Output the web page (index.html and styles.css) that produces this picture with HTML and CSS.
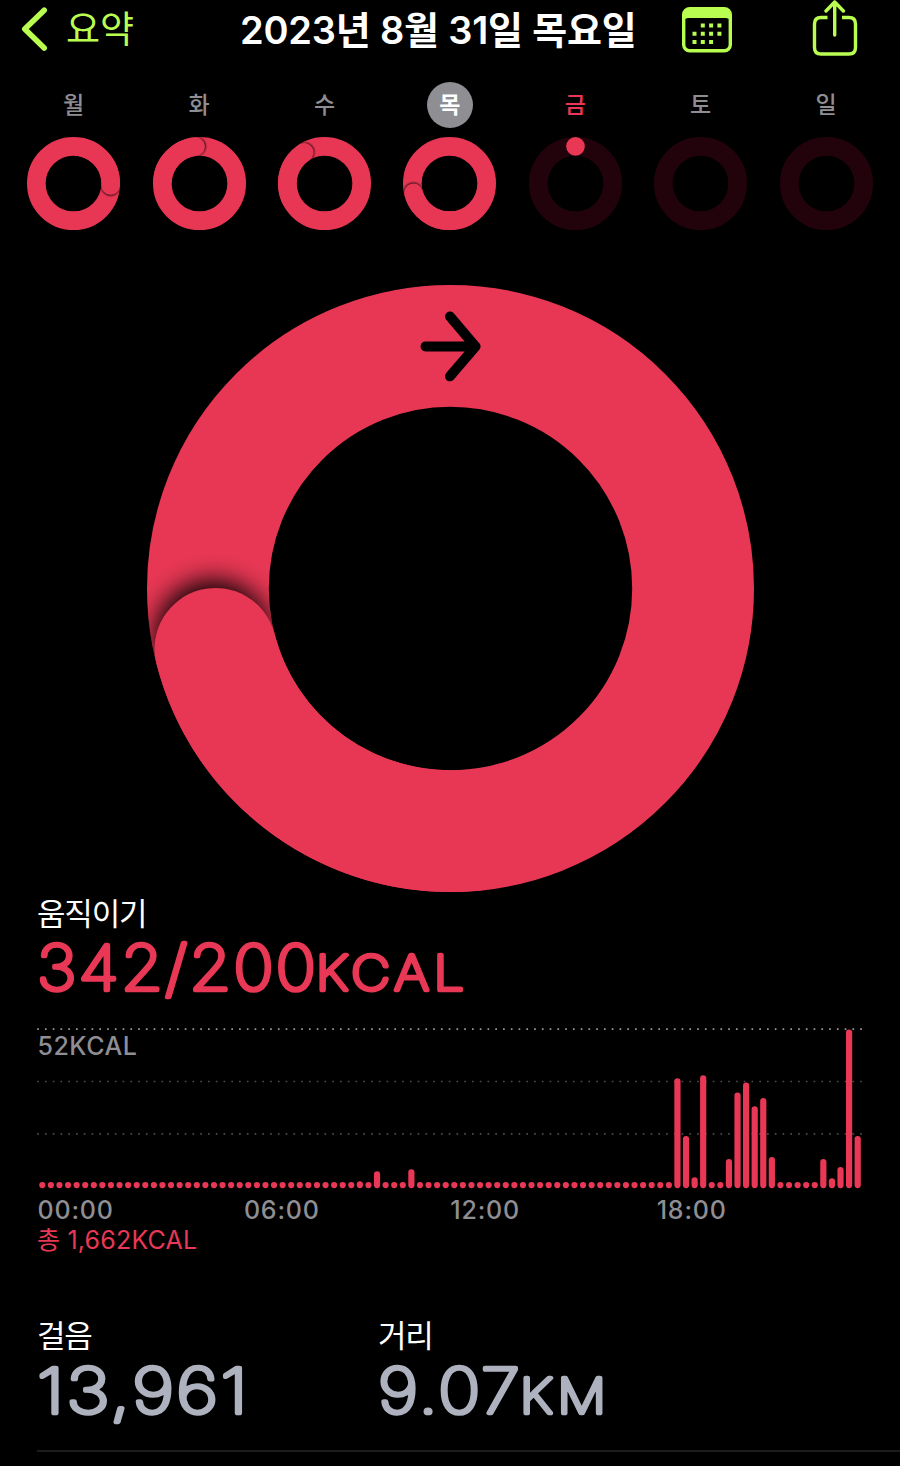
FILE: index.html
```
<!DOCTYPE html>
<html lang="ko">
<head>
  <meta charset="UTF-8">
  <meta name="viewport" content="width=device-width, initial-scale=1.0">
  <title>활동</title>
  <link rel="stylesheet" href="styles.css">
</head>
<body>
<div class="screen">
  <header class="header">
    <a class="back">
      <svg width="28" height="46" viewBox="0 0 28 46"><path d="M24.2 4.2 L4.8 23 L24.2 42"/></svg>
      <span>요약</span>
    </a>
    <h1 class="title">2023년 8월 31일 목요일</h1>
    <svg class="calendar" width="50" height="46" viewBox="0 0 50 46">
      <rect class="frame" x="1.7" y="1.7" width="46.6" height="42" rx="6"/>
      <path d="M1 12 V7 Q1 1 7 1 H43 Q49 1 49 7 V14 Q47 11 44 11 H6 Q3 11 1 14 Z"/>
      <g class="dots">
        <path d="M18.8 18.5h4M27.1 18.5h4M35.4 18.5h4"/>
        <path d="M10.5 26.8h4M18.8 26.8h4M27.1 26.8h4M35.4 26.8h4"/>
        <path d="M10.5 35h4M18.8 35h4M27.1 35h4"/>
      </g>
    </svg>
    <svg class="share" width="46" height="57" viewBox="0 0 46 57">
      <path d="M15.5 17.5 H9 Q2.5 17.5 2.5 24 V47.5 Q2.5 54 9 54 H37 Q43.5 54 43.5 47.5 V24 Q43.5 17.5 37 17.5 H30"/>
      <path d="M22.7 35 V2 M14 11 L22.7 2 L31.4 11"/>
    </svg>
  </header>

  <div class="week">
    <div class="day"><span>월</span><svg class="ring" data-angle="93"></svg></div>
    <div class="day"><span>화</span><svg class="ring" data-angle="354"></svg></div>
    <div class="day"><span>수</span><svg class="ring" data-angle="327"></svg></div>
    <div class="day selected"><span>목</span><svg class="ring" data-angle="255.6"></svg></div>
    <div class="day today"><span>금</span><svg class="ring empty" data-angle="0"></svg></div>
    <div class="day"><span>토</span><svg class="ring empty"></svg></div>
    <div class="day"><span>일</span><svg class="ring empty"></svg></div>
  </div>

  <div class="big">
    <svg class="ring" data-angle="255.6" data-arrow="1"></svg>
  </div>

  <section class="move">
    <h2 class="label">움직이기</h2>
    <svg class="value" width="500" height="76">
      <text x="0" y="56.5" textLength="281" lengthAdjust="spacingAndGlyphs">342/200</text>
      <text class="unit" x="279" y="56.5" textLength="153" lengthAdjust="spacingAndGlyphs">KCAL</text>
    </svg>
    <div class="chart">
      <svg class="grid" width="826" height="160" viewBox="0 0 826 160">
        <path class="top" d="M.2 1.2 H826"/>
        <path d="M.2 53.5 H826"/>
        <path d="M.2 105.9 H826"/>
      </svg>
      <span class="max">52KCAL</span>
      <svg class="bars" id="bars" width="826" height="160"></svg>
    </div>
    <div class="hours"><span>00:00</span><span>06:00</span><span>12:00</span><span>18:00</span></div>
    <div class="total">총 1,662KCAL</div>
  </section>

  <section class="stats">
    <div class="stat">
      <h2 class="label">걸음</h2>
      <svg class="value" width="300" height="76">
        <text x="0" y="57.8" textLength="213" lengthAdjust="spacingAndGlyphs">13,961</text>
      </svg>
    </div>
    <div class="stat">
      <h2 class="label">거리</h2>
      <svg class="value" width="300" height="76">
        <text x="0" y="57.8" textLength="144" lengthAdjust="spacingAndGlyphs">9.07</text>
        <text class="unit" x="142" y="57.8" textLength="91" lengthAdjust="spacingAndGlyphs">KM</text>
      </svg>
    </div>
  </section>
</div>

<script>
  // rings: radius 243, stroke 122, angle is clockwise from the top
  function point(deg){
    const a = deg * Math.PI / 180;
    return [(304 + 243 * Math.sin(a)).toFixed(2), (304 - 243 * Math.cos(a)).toFixed(2)];
  }

  document.querySelectorAll('.ring').forEach((ring, i) => {
    ring.setAttribute('viewBox', '0 0 608 608');
    let html = '<circle class="track" cx="304" cy="304" r="243"/>';
    if(ring.dataset.angle !== undefined){
      const angle = Number(ring.dataset.angle);
      const end = point(angle);
      if(angle > 0){
        const big = ring.dataset.arrow;
        const start = point(angle - 80);
        const shadow = point(angle + (big ? 2.5 : 1));
        html += `<defs>
          <filter id="blur${i}" x="-60%" y="-60%" width="220%" height="220%"><feGaussianBlur stdDeviation="${big ? 13 : 8}"/></filter>
          <clipPath id="clip${i}"><path clip-rule="evenodd" d="M304 0a304 304 0 1 0 .1 0zM304 122a182 182 0 1 0 .1 0z"/></clipPath>
        </defs>
        <g clip-path="url(#clip${i})"><circle cx="${shadow[0]}" cy="${shadow[1]}" r="${big ? 58 : 61}" filter="url(#blur${i})"/></g>
        <path class="arc" d="M${start} A243 243 0 0 1 ${end}"/>`;
      }else{
        html += `<circle class="tip" cx="${end[0]}" cy="${end[1]}" r="61"/>`;
      }
    }
    if(ring.dataset.arrow){
      html += '<path class="arrow" d="M279 61.5 H329 M303.5 31.5 L329 61.5 L303.5 91.5"/>';
    }
    ring.innerHTML = html;
  });

  // one bar per 15 minutes, height in px
  const peaks = {
    37: 7, 39: 17, 43: 19,
    74: 110, 75: 52.3, 76: 11, 77: 113,
    80: 29.3, 81: 95.7, 82: 105.7, 83: 82, 84: 90.3, 85: 31.3,
    91: 29.3, 92: 10, 93: 21.3, 94: 158.7, 95: 52.3
  };
  let html = '';
  for(let i = 0; i < 96; i++){
    const h = peaks[i] || 6.2;
    html += `<rect x="${(2.2 + i * 8.583).toFixed(2)}" y="${(160.2 - h).toFixed(1)}" width="6.2" height="${h}" rx="3.1"/>`;
  }
  document.querySelector('#bars').innerHTML = html;
</script>
</body>
</html>
```
FILE: styles.css
```
* {
  box-sizing: border-box;
  margin: 0;
  padding: 0;
}
body {
  background: #000;
  color: #fff;
  font-family: Inter, "Noto Sans CJK KR", sans-serif;
}
svg {
  display: block;
  fill: none;
}
.screen {
  width: 900px;
  height: 1466px;
  overflow: hidden;
}

/* header */
.header {
  display: flex;
  align-items: flex-start;
  height: 82px;
  padding-left: 20px;
  color: #b9fd50;
}
.back {
  display: flex;
  width: 220px;
  font-size: 37px;
  line-height: 60px;
}
.back svg {
  margin: 6px 18px 0 0;
  stroke: currentColor;
  stroke-width: 5.6;
  stroke-linecap: round;
  stroke-linejoin: round;
}
.title {
  width: 442px;
  color: #fff;
  font-size: 38px;
  font-weight: 600;
  line-height: 60px;
  letter-spacing: -0.2px;
  white-space: nowrap;
}
.calendar {
  margin-top: 7px;
  fill: currentColor;
}
.calendar .frame {
  fill: none;
  stroke: currentColor;
  stroke-width: 3.4;
}
.calendar .dots {
  stroke: currentColor;
  stroke-width: 4;
}
.share {
  margin-left: 80px;
  stroke: currentColor;
  stroke-width: 3.4;
  stroke-linecap: round;
  stroke-linejoin: round;
}
.share path:first-child {
  stroke-linecap: butt;
}

/* week */
.week {
  display: grid;
  grid-template-columns: repeat(7, 125.4px);
  padding-left: 11px;
}
.day {
  display: flex;
  flex-direction: column;
  align-items: center;
  gap: 9px;
  color: #8e8e93;
  font-size: 23px;
  font-weight: 500;
}
.day span {
  width: 46px;
  height: 46px;
  border-radius: 50%;
  line-height: 47px;
  text-align: center;
}
.day .ring {
  width: 93px;
  height: 93px;
}
.selected span {
  background: #8e8e93;
  color: #fff;
  font-weight: 700;
}
.today span {
  color: #e93855;
}

/* rings */
.track, .arc {
  stroke: #e83754;
  stroke-width: 122;
}
.arc {
  stroke-linecap: round;
}
.ring circle {
  fill: #000;
}
.ring .track {
  fill: none;
}
.empty .track {
  stroke: #22030b;
}
.ring .tip {
  fill: #e93855;
}
.arrow {
  stroke: #000;
  stroke-width: 10;
  stroke-linecap: round;
  stroke-linejoin: round;
}
.big {
  height: 663px;
  padding: 55px 0 0 147px;
}
.big .ring {
  width: 607px;
  height: 607px;
}

/* move */
.move {
  padding-left: 37px;
}
.label {
  height: 40px;
  font-size: 31px;
  font-weight: 400;
  line-height: 42px;
  letter-spacing: -1.2px;
}
/* thin letters with a round stroke give the rounded numerals */
.value {
  overflow: visible;
  fill: #e93855;
  stroke: #e93855;
  stroke-width: 4.7;
  stroke-linejoin: round;
  font-size: 62px;
  font-weight: 100;
  letter-spacing: 2px;
}
.value .unit {
  font-size: 47.5px;
  letter-spacing: 4.5px;
}
.chart {
  display: grid;
  width: 826px;
  height: 160px;
  margin-top: 19px;
}
.chart > * {
  grid-area: 1 / 1;
}
.grid {
  stroke: #4b4b4e;
  stroke-width: 1.7;
  stroke-dasharray: 1.7 6.064;
}
.grid .top {
  stroke: #98989d;
}
.max {
  padding: 3px 0 0 0.5px;
  color: #8e8e93;
  font-size: 25px;
  font-weight: 500;
  line-height: 30px;
  letter-spacing: 0.5px;
}
.bars {
  overflow: visible;
  fill: #e93855;
}
.hours {
  display: grid;
  grid-template-columns: repeat(4, 206.4px);
  padding: 7px 0 0 0.5px;
  color: #8e8e93;
  font-size: 25px;
  font-weight: 500;
  line-height: 30px;
  letter-spacing: 0.8px;
}
.total {
  color: #e93855;
  font-size: 25px;
  line-height: 30px;
  letter-spacing: 0.2px;
}

/* stats */
.stats {
  display: flex;
  height: 137px;
  margin: 60px 0 0 37px;
  border-bottom: 2px solid #1c1c1e;
}
.stat {
  width: 341px;
}
.stats .value {
  fill: #aeb2bf;
  stroke: #aeb2bf;
}
```
